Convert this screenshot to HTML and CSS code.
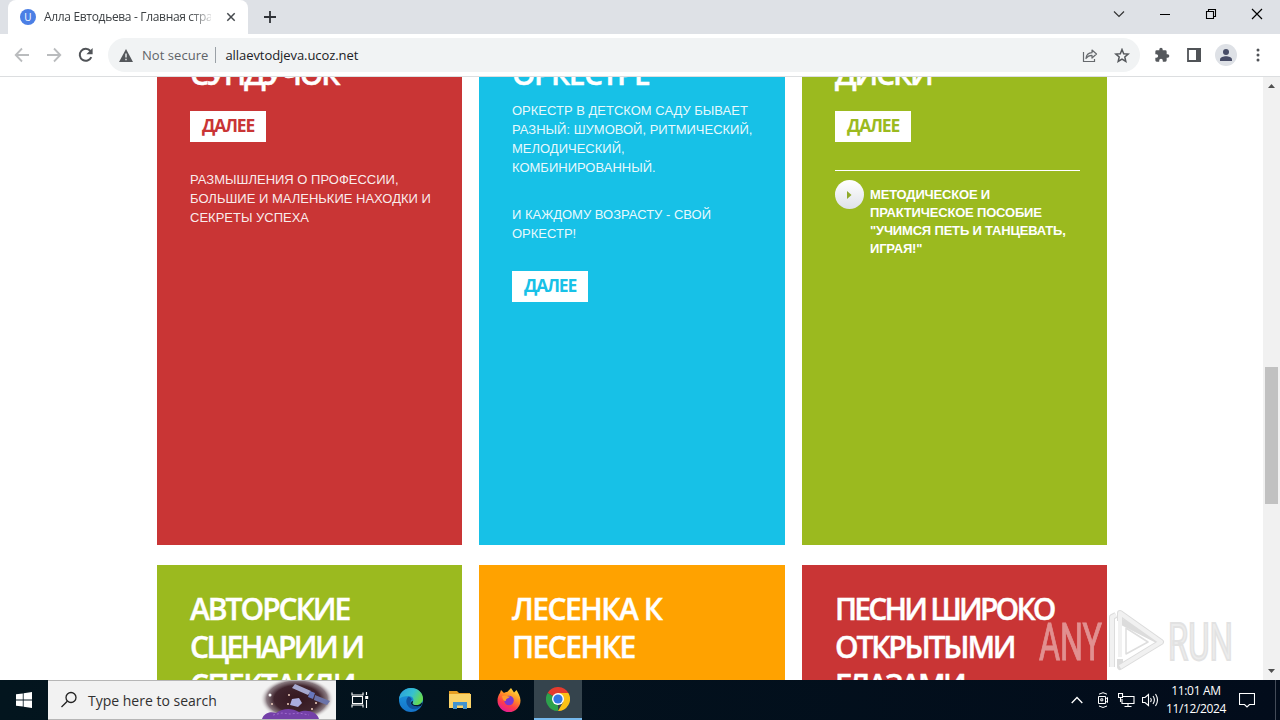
FILE: index.html
```html
<!DOCTYPE html>
<html lang="ru">
<head>
<meta charset="utf-8">
<title>Алла Евтодьева - Главная страница</title>
<link rel="stylesheet" href="styles.css">
</head>
<body>
<div class="screen">
  <header class="tabstrip">
    <div class="tab">
      <span class="favicon">U</span>
      <span class="tab-title">Алла Евтодьева - Главная страница</span>
      <svg class="tab-close" width="10" height="10" viewBox="0 0 10 10"><path d="M1.3 1.3l7.4 7.4M8.7 1.3L1.3 8.7" stroke="#45494d" stroke-width="1.5"/></svg>
    </div>
    <svg class="new-tab" width="12" height="12" viewBox="0 0 12 12"><path d="M6 0v12M0 6h12" stroke="#2f3237" stroke-width="1.8"/></svg>
    <div class="window-buttons">
      <svg width="46" height="28" viewBox="0 0 46 28"><path d="M18 11.500l5 5 5-5" fill="none" stroke="#333" stroke-width="1.2"/></svg>
      <svg width="46" height="28" viewBox="0 0 46 28"><path d="M18 14.500h10" stroke="#000"/></svg>
      <svg width="46" height="28" viewBox="0 0 46 28"><path d="M18.500 11.500h7v7h-7zM20.500 11v-1.500h7v7H26" fill="none" stroke="#000" stroke-width="1.1"/></svg>
      <svg width="46" height="28" viewBox="0 0 46 28"><path d="M18 9l10 10M28 9L18 19" stroke="#000" stroke-width="1.2"/></svg>
    </div>
  </header>
  <div class="toolbar">
    <svg class="nav" width="16" height="16" viewBox="0 0 16 16"><path d="M15 8H2M8 1.500L1.700 8 8 14.500" fill="none" stroke="#babcbe" stroke-width="1.8"/></svg>
    <svg class="nav" width="16" height="16" viewBox="0 0 16 16"><path d="M1 8h13M8 1.500L14.300 8 8 14.500" fill="none" stroke="#babcbe" stroke-width="1.8"/></svg>
    <svg class="nav" width="16" height="16" viewBox="0 0 16 16"><path d="M13.300 10.200A6 6 0 1 1 12.400 4" fill="none" stroke="#505357" stroke-width="2"/><path d="M14.600 1v6.200H8.400z" fill="#505357"/></svg>
    <div class="omnibox">
      <svg width="14" height="13" viewBox="0 0 14 13"><path d="M7 0l7 13H0z" fill="#55585c"/><path d="M7 4.500v4M7 9.700v1.600" stroke="#f1f3f4" stroke-width="1.400"/></svg>
      <span class="insecure">Not secure</span>
      <span class="divider"></span>
      <span class="url">allaevtodjeva.ucoz.net</span>
      <svg class="share" width="16" height="15" viewBox="0 0 16 15"><path d="M1.500 4v9.500h11V11" fill="none" stroke="#66696d" stroke-width="1.200"/><path d="M4 10.500c.3-4 2.500-5.700 6-5.800V2l4.500 4L10 10V7.400C7.300 7.400 5.500 8.300 4 10.500z" fill="none" stroke="#66696d" stroke-width="1.200" stroke-linejoin="round"/></svg>
      <svg width="16" height="15" viewBox="0 0 16 15"><path d="M8 1.500l1.700 4.200 4.500.4-3.400 2.900 1 4.400L8 11.100l-3.800 2.300 1-4.400L1.800 6.100l4.500-.4z" fill="none" stroke="#55585c" stroke-width="1.500"/></svg>
    </div>
    <svg class="ext" width="16" height="16" viewBox="0 0 24 24"><path d="M20.500 11H19V7a2 2 0 0 0-2-2h-4V3.500a2.500 2.500 0 0 0-5 0V5H4a2 2 0 0 0-2 2v3.800h1.500a2.700 2.700 0 0 1 0 5.400H2V20a2 2 0 0 0 2 2h3.800v-1.500a2.700 2.700 0 0 1 5.400 0V22H17a2 2 0 0 0 2-2v-4h1.500a2.500 2.500 0 0 0 0-5z" fill="#55585c"/></svg>
    <svg class="panel" width="14" height="14" viewBox="0 0 14 14"><path d="M1 1h12v12H1z" fill="none" stroke="#505357" stroke-width="1.800"/><path d="M9 0h5v14H9z" fill="#505357"/></svg>
    <svg class="avatar" width="22" height="22" viewBox="0 0 22 22"><circle cx="11" cy="11" r="11" fill="#dee1e6"/><circle cx="11" cy="8" r="3" fill="#474c66"/><path d="M5 17v-1.500c0-2.300 3.500-3.300 6-3.300s6 1 6 3.300V17z" fill="#474c66"/></svg>
    <svg class="kebab" width="4" height="14" viewBox="0 0 4 14"><g fill="#505357"><circle cx="2" cy="2" r="1.500"/><circle cx="2" cy="7" r="1.500"/><circle cx="2" cy="12" r="1.500"/></g></svg>
  </div>

  <div class="viewport">
    <main class="page">
      <section class="row row-first">
        <article class="card red">
          <h2><span class="tight">СУНДУЧОК</span></h2>
          <a class="more">ДАЛЕЕ</a>
          <p>РАЗМЫШЛЕНИЯ О ПРОФЕССИИ,<br>БОЛЬШИЕ И МАЛЕНЬКИЕ НАХОДКИ И<br>СЕКРЕТЫ УСПЕХА</p>
        </article>
        <article class="card blue wide">
          <h2>ОРКЕСТРЕ</h2>
          <p>ОРКЕСТР В ДЕТСКОМ САДУ БЫВАЕТ<br>РАЗНЫЙ: ШУМОВОЙ, РИТМИЧЕСКИЙ,<br>МЕЛОДИЧЕСКИЙ,<br>КОМБИНИРОВАННЫЙ.</p>
          <p class="second">И КАЖДОМУ ВОЗРАСТУ - СВОЙ<br>ОРКЕСТР!</p>
          <a class="more">ДАЛЕЕ</a>
        </article>
        <article class="card green">
          <h2><span class="tight">ДИСКИ</span></h2>
          <a class="more">ДАЛЕЕ</a>
          <div class="list-item">
            <span class="bullet"><svg width="5" height="8" viewBox="0 0 5 8"><path d="M0 0l4.500 4L0 8z" fill="#8fa92c"/></svg></span>
            <strong>МЕТОДИЧЕСКОЕ И<br>ПРАКТИЧЕСКОЕ ПОСОБИЕ<br>"УЧИМСЯ ПЕТЬ И ТАНЦЕВАТЬ,<br>ИГРАЯ!"</strong>
          </div>
        </article>
      </section>
      <section class="row row-second">
        <article class="card green"><h2><span class="snug">АВТОРСКИЕ</span><br><span class="tighter">СЦЕНАРИИ И</span><br>СПЕКТАКЛИ</h2></article>
        <article class="card orange wide"><h2>ЛЕСЕНКА К<br>ПЕСЕНКЕ</h2></article>
        <article class="card red"><h2><span class="tightest">ПЕСНИ ШИРОКО</span><br><span class="tight">ОТКРЫТЫМИ</span><br><span class="tighter">ГЛАЗАМИ</span></h2></article>
      </section>
    </main>
    <div class="scrollbar">
      <svg width="7" height="4" viewBox="0 0 7 4"><path d="M0 4l3.500-4L7 4z" fill="#505050"/></svg>
      <span class="thumb"></span>
      <svg width="7" height="4" viewBox="0 0 7 4"><path d="M0 0l3.500 4L7 0z" fill="#505050"/></svg>
    </div>
    <svg class="watermark" width="200" height="70" viewBox="0 0 200 70">
      <g font-family="Roboto, sans-serif" font-size="51">
        <text x="3" y="53" textLength="63" lengthAdjust="spacingAndGlyphs" fill="#fff" stroke="#fff" stroke-width="1" opacity=".45">ANY</text>
        <text x="132" y="53" textLength="65" lengthAdjust="spacingAndGlyphs" fill="#ececec" stroke="#e2e2e2" stroke-width="2">RUN</text>
      </g>
      <g fill="none" stroke-linejoin="round">
        <path d="M76 60V10l4-2M84 14v-8l41 29-41 25v-8M84 14l41 21" stroke="#dcdcdc" stroke-width="6"/>
        <path d="M76 60V10l4-2M84 50V6l41 29-41 25" stroke="#f1f1f1" stroke-width="4"/>
        <path d="M90 47V21l22 14z" fill="#fff" stroke="#dedede" stroke-width="1.500"/>
      </g>
    </svg>
  </div>

  <footer class="taskbar">
    <svg class="start" width="16" height="16" viewBox="0 0 16 16"><path d="M0 2.300l6.800-.9v6.100H0zM7.600 1.300L16 0v7.500H7.600zM0 8.400h6.800v6.200L0 13.700zM7.600 8.400H16V16l-8.400-1.200z" fill="#fff"/></svg>
    <div class="search">
      <svg class="lens" width="18" height="18" viewBox="0 0 18 18"><circle cx="11" cy="6.500" r="5" fill="none" stroke="#222" stroke-width="1.300"/><path d="M7.300 10.200L1.500 16" stroke="#222" stroke-width="1.300"/></svg>
      <span>Type here to search</span>
      <svg class="art" width="76" height="38" viewBox="0 0 76 38">
        <defs><radialGradient id="space"><stop offset="0" stop-color="#34171f"/><stop offset=".62" stop-color="#40252e"/><stop offset=".82" stop-color="#6d5a62" stop-opacity=".8"/><stop offset="1" stop-color="#f2f2f2" stop-opacity="0"/></radialGradient></defs>
        <ellipse cx="37" cy="18" rx="37" ry="22" fill="url(#space)"/>
        <path d="M2 38c2-6 8-8 14-6 7-5 16-5 23-1 7-3 18-1 20 7z" fill="#7440a8"/>
        <path d="M13 34l9-2 8 1 9-1 10 2" stroke="#a06bcf" stroke-dasharray="2 2" fill="none"/>
        <path d="M35 3l16 7-3 4-16-7z" fill="#a6a9cf"/><path d="M50 10l5 2-2 6-5-2z" fill="#6777bc"/><path d="M55 14l15 6-3 4-13-5z" fill="#6b73a8"/>
        <path d="M32 18l7-1 3 5-4 4-8-2z" fill="#aaaedf"/>
        <g fill="#f2d2c0"><circle cx="10" cy="14" r="1.500" fill="#fff"/><circle cx="29" cy="14" r="1"/><circle cx="12" cy="23" r="1"/><circle cx="56" cy="22" r="1"/><circle cx="52" cy="28" r="1"/><circle cx="28" cy="23" r="1"/></g>
      </svg>
    </div>
    <div class="apps">
      <div class="app task-view"><svg width="18" height="18" viewBox="0 0 18 18"><path d="M1 1.500V4h11V1.500M1.500 5.500h10v7h-10zM1 16.500V14h11v2.500M15.500 1v3M15.500 9v8" fill="none" stroke="#fff" stroke-width="1.100"/><path d="M14.200 5h3v3h-3z" fill="#fff"/></svg></div>
      <div class="app"><svg width="24" height="24" viewBox="0 0 24 24">
        <defs><linearGradient id="eg1" x1="0" y1="0" x2="1" y2=".4"><stop offset="0" stop-color="#299bdd"/><stop offset=".6" stop-color="#36c1d0"/><stop offset="1" stop-color="#65d954"/></linearGradient><linearGradient id="eg2" x1="0" y1="0" x2="0" y2="1"><stop offset="0" stop-color="#1c9be0"/><stop offset="1" stop-color="#1573c9"/></linearGradient></defs>
        <circle cx="12" cy="12" r="12" fill="url(#eg2)"/>
        <path d="M0 11C1 4 6 0 12 0c7 0 12 5 12 10.500 0 4-3 6.500-6.500 6.500-3 0-4.700-1.200-3.700-2.600 1.800-2.500.2-6.400-4-6.400C5.500 8 1.500 9 0 11z" fill="url(#eg1)"/>
        <path d="M9 9c-3 3-2 9 3 11.500 3 1.500 7 .8 10-2.500-3 1-7 .8-9-1.200-2-2-1.500-4.300-.2-5.300C12 9.500 10.500 8.500 9 9z" fill="#10539f"/>
        <path d="M13.800 14.400c-1 1.400.7 2.600 3.700 2.600 2.200 0 4.200-1 5.400-2.600l.6.400c-.4 1.300-.9 2.300-1.600 3.200-3 .8-7 .7-9-1.200-1.500-1.500-1-3 1-4z" fill="#07192a"/>
      </svg></div>
      <div class="app"><svg width="22" height="18" viewBox="0 0 22 18"><path d="M0 0h8l2 2h11v4H0z" fill="#e79f23"/><path d="M0 3h22v14H0z" fill="#fbd368"/><path d="M4 18v-7h14v7h-4v-3.500H8V18z" fill="#4293cf"/></svg></div>
      <div class="app"><svg width="24" height="24" viewBox="0 0 24 24">
        <defs><linearGradient id="ff" x1=".8" y1="0" x2=".3" y2="1"><stop offset="0" stop-color="#ffe53c"/><stop offset=".4" stop-color="#ff8f25"/><stop offset=".7" stop-color="#ff3c4a"/><stop offset="1" stop-color="#e3199c"/></linearGradient></defs>
        <path d="M3 5l1-3 3 3c1-.8 2-1.200 3.500-1.300L14 0l3 4.500L19.500 2C21 5 23.500 8 23.500 12.500A11.500 11.500 0 0 1 .5 12.500C.5 9.500 1.500 7 3 5z" fill="url(#ff)"/><circle cx="12" cy="12.500" r="4.800" fill="#7a37d3"/><path d="M5 8c3-1.500 5 .5 8 .5-1 2-4 1.800-4 3.500S6 14 5 8z" fill="#ff9b2d"/>
      </svg></div>
      <div class="app active"><svg width="24" height="24" viewBox="0 0 24 24"><path d="M12 12L1.600 6A12 12 0 0 1 22.400 6z" fill="#e33b2e"/><path d="M12 12v12A12 12 0 0 1 1.600 6z" fill="#2da14c"/><path d="M12 6h10.400A12 12 0 0 1 12 24l5.200-9z" fill="#fbc116"/><circle cx="12" cy="12" r="6" fill="#fff"/><circle cx="12" cy="12" r="4.600" fill="#3277e3"/></svg></div>
    </div>
    <div class="tray">
      <svg class="chevron" width="12" height="8" viewBox="0 0 12 8"><path d="M.7 7L6 1.500 11.300 7" fill="none" stroke="#fff" stroke-width="1.300"/></svg>
      <svg class="meet" width="14" height="16" viewBox="0 0 14 16"><path d="M3 2.200Q7-.8 11 2.200M3 14q4 3 8 0M2.500 4.500h7v7h-7zM9.500 7l2-1.500v5L9.500 9M4.800 6.800h2v2h-2z" fill="none" stroke="#fff"/></svg>
      <svg class="net" width="17" height="15" viewBox="0 0 17 15"><path d="M5 3.500h11v7H4V6M10 10.500V14M6.500 13.500h7M.5.500h4v4h-4zM2.500 4.500V9" fill="none" stroke="#fff" stroke-width="1.100"/></svg>
      <svg class="volume" width="17" height="14" viewBox="0 0 17 14"><path d="M.5 4.500H3l3.500-3v11L3 9.500H.5zM8.500 5q1.500 2 0 4M11 3q2.800 4 0 8M13.500 1q4 6 0 12" fill="none" stroke="#fff" stroke-width="1.100"/></svg>
      <div class="clock"><span class="time">11:01 AM</span><span>11/12/2024</span></div>
      <svg class="note" width="16" height="16" viewBox="0 0 16 16"><path d="M.5 1.500h15v11h-5L8 15l-2.500-2.500h-5z" fill="none" stroke="#fff" stroke-width="1.100"/></svg>
      <span class="peek"></span>
    </div>
  </footer>
</div>
</body>
</html>
```
FILE: styles.css
```css
* { box-sizing: border-box; }
body { margin: 0; font-family: "Open Sans", "Noto Sans", sans-serif; }
svg { display: block; flex: none; }
.screen { width: 1280px; height: 720px; overflow: hidden; display: flex; flex-direction: column; background: #fff; }

.tabstrip { height: 34px; background: #dee1e6; display: flex; flex: none; align-items: flex-start; }
.tab { width: 240px; height: 34px; margin-left: 8px; padding: 0 12px; background: #fff; border-radius: 8px 8px 0 0; display: flex; align-items: center; }
.favicon { width: 16px; height: 16px; border-radius: 50%; background: #4b7fe5; color: #fff; font-size: 10px; line-height: 16px; text-align: center; flex: none; }
.tab-title { width: 170px; margin-left: 8px; font-size: 12px; line-height: 18px; letter-spacing: -.33px; color: #3c4043; white-space: nowrap; overflow: hidden; mask-image: linear-gradient(90deg, #000 145px, transparent 172px); }
.tab-close { margin-left: 15px; }
.new-tab { margin: 11px 0 0 16px; }
.window-buttons { display: flex; margin-left: auto; }

.toolbar { height: 43px; flex: none; display: flex; align-items: center; padding-left: 14px; border-bottom: 1px solid #dcdee0; }
.nav { margin-right: 16px; }
.omnibox { width: 1032px; height: 34px; margin-left: -2px; padding: 0 10px 0 11px; border-radius: 17px; background: #f1f3f4; display: flex; align-items: center; font-size: 13px; }
.insecure { margin-left: 9px; color: #5f6368; letter-spacing: .05px; white-space: nowrap; }
.divider { width: 1px; height: 16px; margin: 0 9px 0 7px; background: #9aa0a6; }
.url { color: #202124; white-space: nowrap; letter-spacing: -.07px; }
.share { margin: 0 16px 0 auto; }
.ext { margin-left: 14px; }
.panel { margin-left: 17px; }
.avatar { margin-left: 14px; }
.kebab { margin-left: 19px; }

.viewport { height: 603px; flex: none; overflow: hidden; position: relative; display: flex; justify-content: space-between; }
.page { margin-left: 157px; width: 950px; }
.row { display: flex; gap: 17px; }
.row-first { height: 490px; margin-top: -22px; }
.row-second { height: 400px; margin-top: 20px; }
.row-second .card { padding-top: 25px; }
.card { width: 305px; padding: 0 0 0 33px; color: #fff; white-space: nowrap; }
.wide { width: 306px; }
.red { background: #c93535; color: #c93535; }
.blue { background: #17c1e7; color: #17c1e7; }
.green { background: #9bba1f; color: #9bba1f; }
.orange { background: #ffa200; }
h2 { margin: 0; font-size: 30px; line-height: 38px; font-weight: 600; letter-spacing: -1.5px; color: #fff; -webkit-text-stroke: .4px #fff; }
.snug { letter-spacing: -2px; }
.tight { letter-spacing: -2.2px; }
.tighter { letter-spacing: -2.6px; }
.tightest { letter-spacing: -2.8px; }
.more { display: block; width: 76px; height: 31px; margin-top: 18px; background: #fff; font-size: 17.5px; line-height: 29px; font-weight: 700; text-align: center; letter-spacing: -1.2px; }
p { margin: 28px 0 0; font-family: "Liberation Sans", Arial, sans-serif; font-size: 13px; line-height: 19px; color: rgba(255, 255, 255, .92); }
.blue p { margin-top: 8px; }
.blue .second { margin-top: 28px; }
.blue .more { margin-top: 28px; }
.list-item { width: 245px; margin-top: 28px; padding-top: 9px; border-top: 1px solid #fff; display: flex; gap: 6px; }
.bullet { width: 29px; height: 29px; flex: none; border-radius: 50%; background: linear-gradient(#fff, #dfe2e8); display: flex; align-items: center; justify-content: center; }
.list-item strong { margin-top: 6px; font-family: "Liberation Sans", Arial, sans-serif; font-size: 13px; line-height: 18px; letter-spacing: -.18px; color: #fff; }

.scrollbar { width: 17px; background: #f1f1f1; display: flex; flex-direction: column; align-items: center; padding: 7px 0 7px; }
.scrollbar .thumb { width: 13px; height: 137px; margin: 279px 0 auto; background: #c1c1c1; }
.watermark { position: absolute; left: 1036px; top: 530px; }

.taskbar { height: 40px; flex: none; display: flex; align-items: center; background: linear-gradient(90deg, #03151e, #020c1b); color: #fff; }
.start { margin: 0 16px; }
.search { width: 288px; height: 40px; background: #f2f2f2; border: 1px solid #b6b6b6; border-width: 1px 0; display: flex; align-items: center; color: #303030; font-size: 14px; white-space: nowrap; }
.lens { margin: 0 10px 0 12px; }
.art { margin-left: auto; }
.apps { display: flex; }
.app { width: 49px; height: 40px; display: flex; align-items: center; justify-content: center; }
.task-view { width: 50px; padding-right: 2px; }
.active { background: #35444d; border-bottom: 2px solid #76b9ed; width: 48px; margin-left: 1px; }
.tray { margin-left: auto; display: flex; align-items: center; }
.chevron { margin-right: 2px; }
.meet { margin-left: 11px; }
.net { margin-left: 8px; }
.volume { margin-left: 7px; }
.clock { width: 74px; margin-left: 0; display: flex; flex-direction: column; align-items: center; font-size: 12px; line-height: 18px; letter-spacing: -.35px; }
.time { letter-spacing: -.3px; }
.note { margin-left: 6px; }
.peek { width: 1px; height: 40px; margin: 0 4px 0 20px; background: #434b58; }
```
